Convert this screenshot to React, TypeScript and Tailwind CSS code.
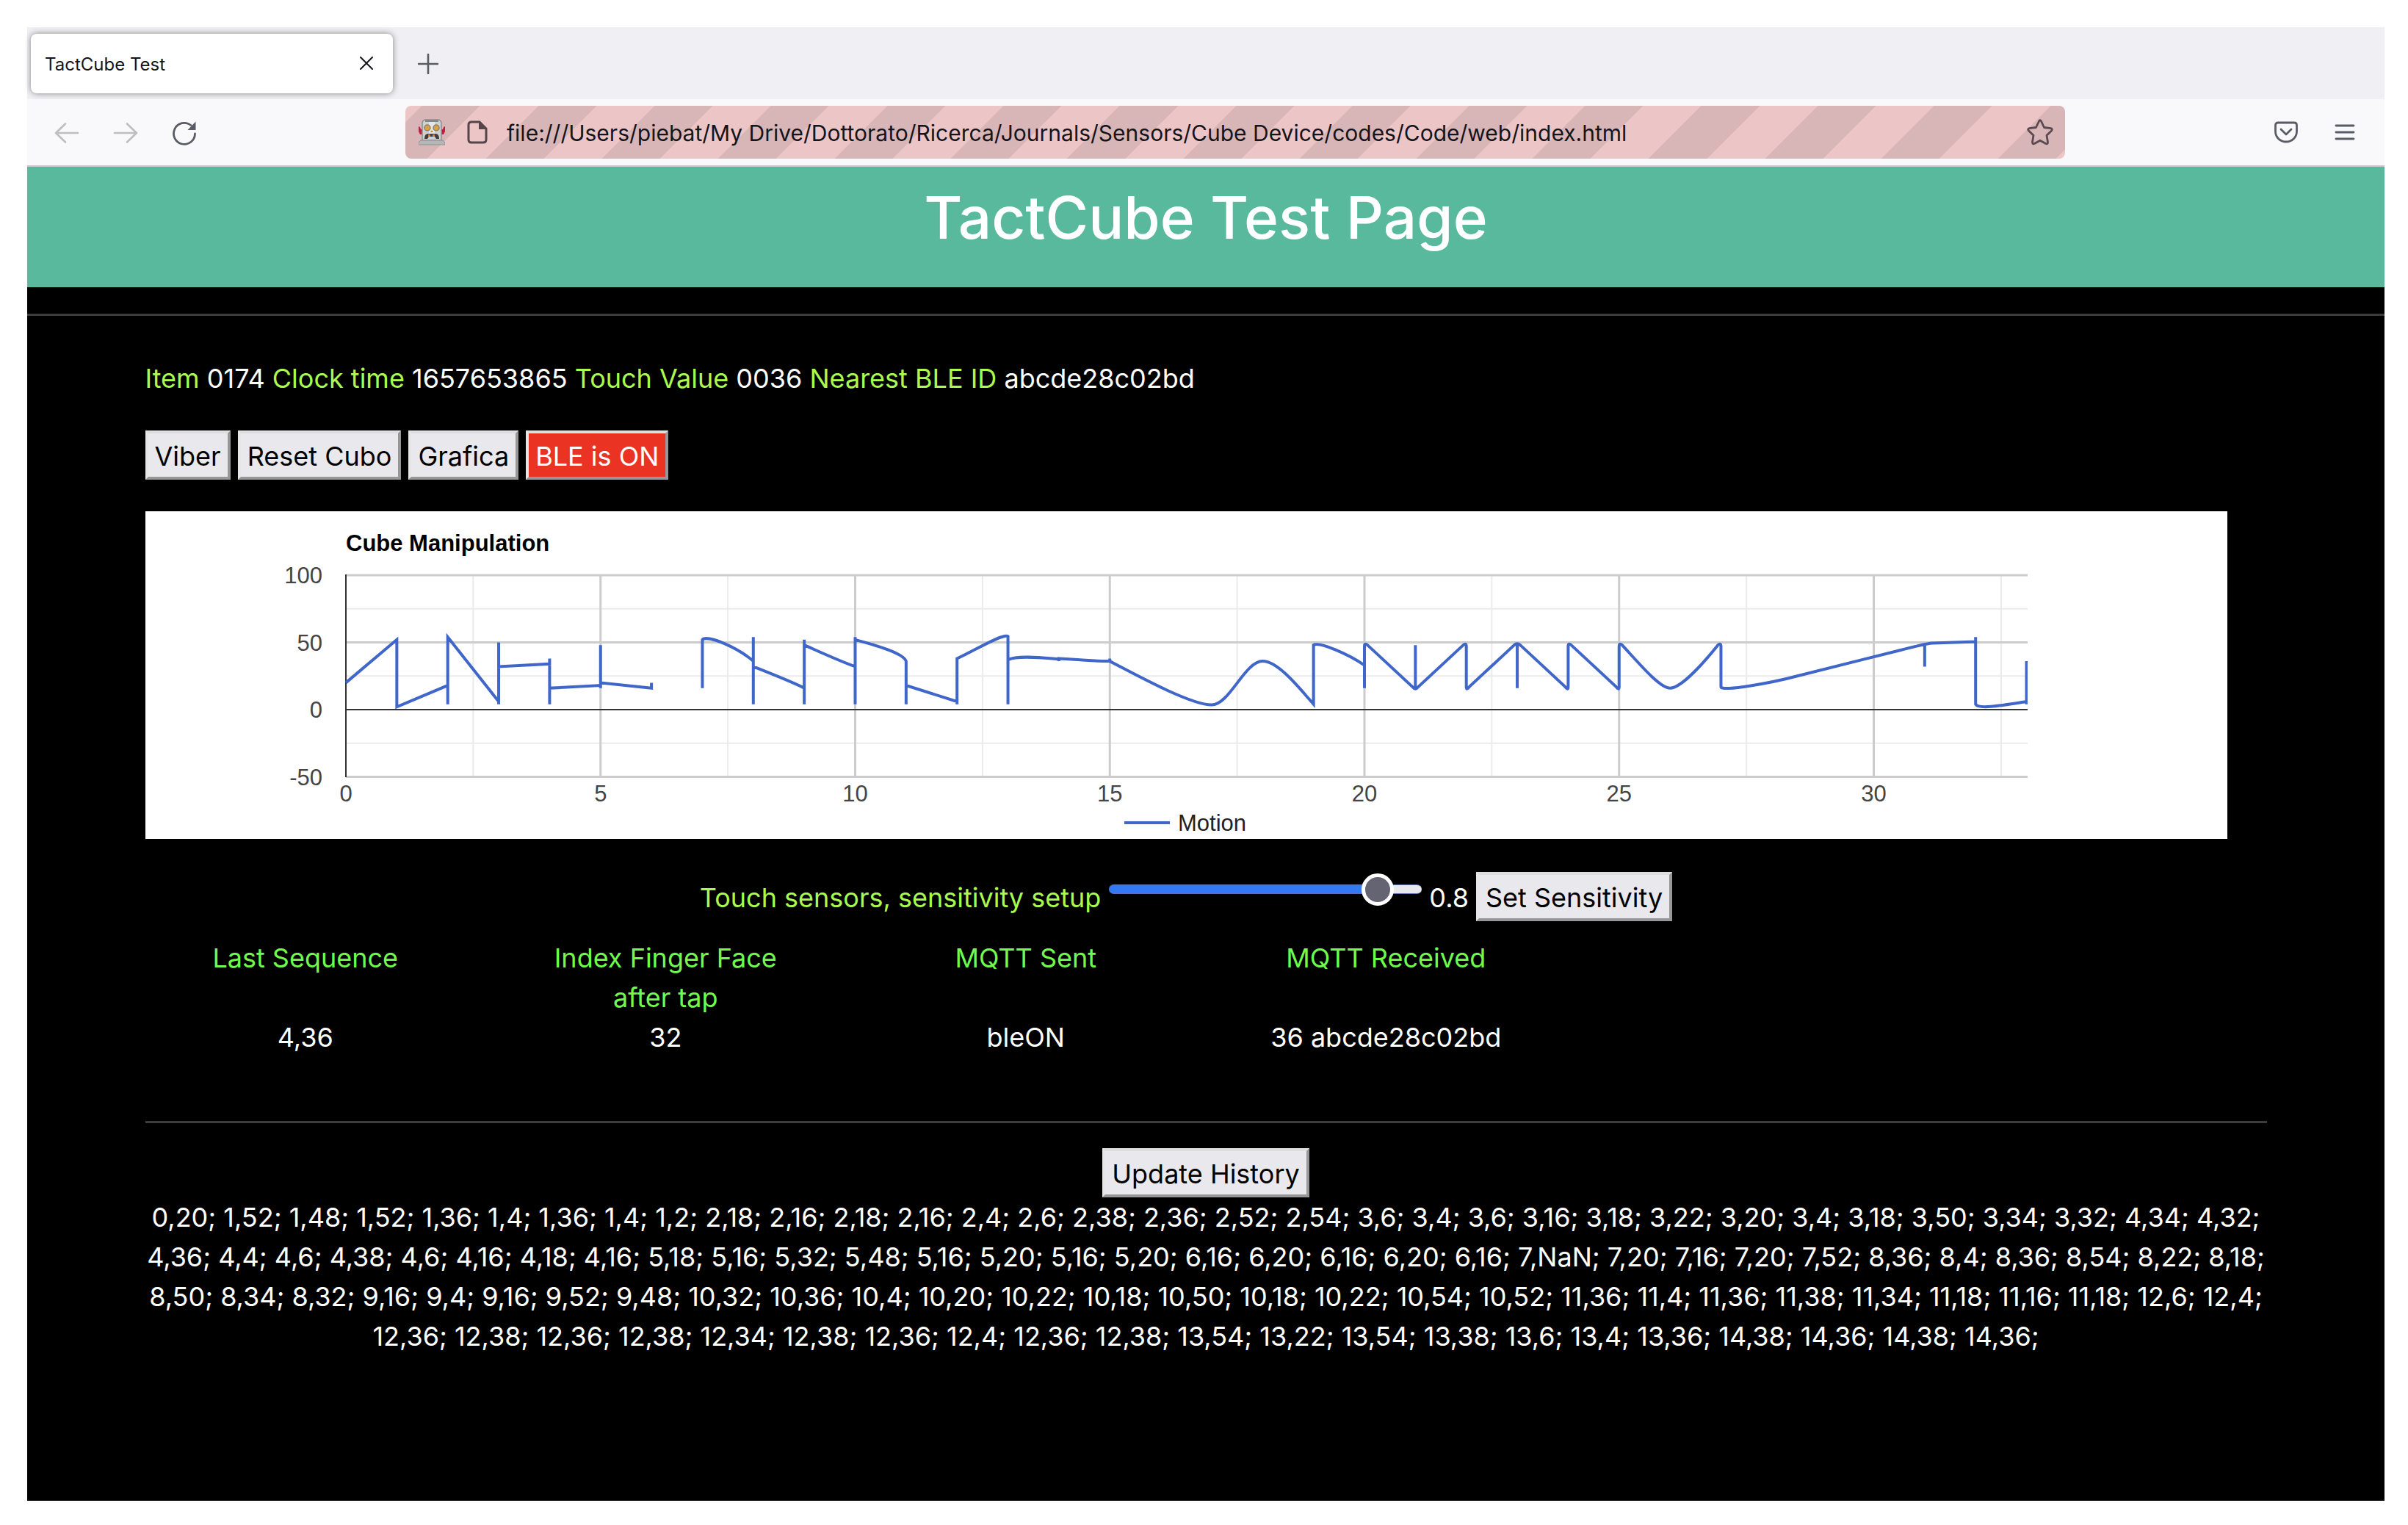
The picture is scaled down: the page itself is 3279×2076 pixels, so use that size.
import React, { useState } from 'react';

const HISTORY =
  '0,20; 1,52; 1,48; 1,52; 1,36; 1,4; 1,36; 1,4; 1,2; 2,18; 2,16; 2,18; 2,16; 2,4; 2,6; 2,38; 2,36; 2,52; 2,54; 3,6; 3,4; 3,6; 3,16; 3,18; 3,22; 3,20; 3,4; 3,18; 3,50; 3,34; 3,32; 4,34; 4,32; 4,36; 4,4; 4,6; 4,38; 4,6; 4,16; 4,18; 4,16; 5,18; 5,16; 5,32; 5,48; 5,16; 5,20; 5,16; 5,20; 6,16; 6,20; 6,16; 6,20; 6,16; 7,NaN; 7,20; 7,16; 7,20; 7,52; 8,36; 8,4; 8,36; 8,54; 8,22; 8,18; 8,50; 8,34; 8,32; 9,16; 9,4; 9,16; 9,52; 9,48; 10,32; 10,36; 10,4; 10,20; 10,22; 10,18; 10,50; 10,18; 10,22; 10,54; 10,52; 11,36; 11,4; 11,36; 11,38; 11,34; 11,18; 11,16; 11,18; 12,6; 12,4; 12,36; 12,38; 12,36; 12,38; 12,34; 12,38; 12,36; 12,4; 12,36; 12,38; 13,54; 13,22; 13,54; 13,38; 13,6; 13,4; 13,36; 14,38; 14,36; 14,38; 14,36;';

// Motion curve in data units: x is the sequence index, y the touch value
const MOTION_PATH = [
  'M0 20L1 52V2L2 18V4V54L3 6V4V50V32L4 34V38V4V16L5 18V16V48V20L6 16V20',
  'M7 16V52C7.1 56 7.7 46 8 36V54V4V32C8.4 26 8.8 20 9 16V4V52V48C9.3 43 9.7 36 10 32V4V54V52',
  'C10.4 48 10.95 42 11 36V4V18L12 6V4V38C12.3 43 12.9 57 13 54.5V4V37',
  'C13.2 41 13.8 38 14 37.5V36V38C14.4 37 14.8 36 15 36V38V36',
  'C15.6 24 16.6 3.5 17 3.5C17.35 3.5 17.65 36 18 36C18.3 36 18.7 17 19 4V48',
  'C19.1 51 19.7 41 20 33V16V47Q20 50 20.06 48L20.94 17Q21 14 21.06 17L21.94 48Q22 50 22 47V17',
  'Q22 14 22.06 17L22.94 48Q23 50 23.06 48L23.94 17Q24 14 24 17V47Q24 50 24.06 48L24.94 17Q25 14 25 17V47',
  'Q25 50 25.06 48C25.4 34 25.8 16 26 16C26.2 16 26.6 32 26.94 48Q27 50 27 47V17',
  'C27 13 28 20 28.5 25L30.5 44C30.8 47 31 49 31.15 49.5L32 50.5V54V4C32.05 0 32.5 3 33 6V4V36',
  'M21 16V48M23 48V16M31 49V32',
].join('');

const PLOT = { left: 273, right: 2563, top: 87, bottom: 361, zero: 270 };
const xPos = (x: number) => PLOT.left + x * 69.35;
const yPos = (y: number) => PLOT.zero - y * 1.83;

interface RaisedButtonProps {
  children: React.ReactNode;
  active?: boolean;
  onClick?: () => void;
}

const RaisedButton: React.FC<RaisedButtonProps> = ({ children, active, onClick }) => (
  <button
    type="button"
    onClick={onClick}
    className={`h-[67px] shrink-0 border-4 px-[9px] pt-[2px] text-[36px] leading-[54px] whitespace-nowrap border-t-[#dedede] border-l-[#e6e6e6] border-r-[#979797] border-b-[#979797] ${
      active ? 'bg-[#ea3323] text-white' : 'bg-[#e9e9ed] text-black'
    }`}
  >
    {children}
  </button>
);

const TabStrip: React.FC = () => (
  <div className="flex h-[98px] items-center bg-[#f0f0f4] pl-[5px]">
    <div className="flex h-[81px] w-[493px] items-center justify-between rounded-lg bg-white pr-[27px] pl-[19px] shadow-[0_0_8px_rgba(0,0,0,0.45)]">
      <span className="pt-[3px] text-[24px] text-[#15141a]">TactCube Test</span>
      <button type="button" aria-label="Close tab">
        <svg className="h-[18px] w-[18px]" viewBox="0 0 18 18" stroke="#15141a" strokeWidth={2} strokeLinecap="round">
          <path d="M1 1l16 16M17 1L1 17" />
        </svg>
      </button>
    </div>
    <button type="button" aria-label="New tab" className="ml-[34px] pt-[2px]">
      <svg className="h-[28px] w-[28px]" viewBox="0 0 28 28" stroke="#5b5b66" strokeWidth={2.6} strokeLinecap="round">
        <path d="M14 1v26M1 14h26" />
      </svg>
    </button>
  </div>
);

const RobotIcon: React.FC = () => (
  <svg className="h-[36px] w-[36px] shrink-0" viewBox="0 0 36 36">
    <path d="M0 10l2 1 1 3h2v7H2L0 17zM36 10l-2 1-1 3h-2v7h3l2-4z" fill="#c0203f" />
    <path d="M5 29V6q0-5 5-5h16q5 0 5 5v23z" fill="#cfd1d1" stroke="#8d9090" strokeWidth={1.5} />
    <path d="M9 1h18v3H9z" fill="#858888" />
    <path d="M14 4h8v16h-8z" fill="#e6e8e8" />
    <path d="M3 29h30l3 3v3H0v-3z" fill="#b4b7b7" stroke="#8d9090" />
    <circle cx="12" cy="12" r="4" fill="#dca03f" stroke="#8a8173" strokeWidth={1.5} />
    <circle cx="24" cy="12" r="4" fill="#dca03f" stroke="#8a8173" strokeWidth={1.5} />
    <path d="M16 18l2-3 2 3z" fill="#d78226" />
    <path d="M8 27q0-7 5-7h10q5 0 5 7h-4l-2-3h-8l-2 3z" fill="#443a3a" />
    <path d="M13 21h3v3h-3zM19 21h3v3h-3z" fill="#d78226" />
  </svg>
);

const AddressBar: React.FC = () => (
  <div className="flex h-[92px] items-center border-b-2 border-[#cbcbcd] bg-[#f9f9fb] pr-[40px] pl-[37px]">
    <div className="flex w-[478px] shrink-0 items-center gap-[46px] pt-[2px]">
      <button type="button" aria-label="Back">
        <svg className="h-[34px] w-[34px]" viewBox="0 0 34 34" fill="none" stroke="#bebec0" strokeWidth={2.6} strokeLinecap="round" strokeLinejoin="round">
          <path d="M32 17H2M15 4.5L2 17l13 12.500" />
        </svg>
      </button>
      <button type="button" aria-label="Forward">
        <svg className="h-[34px] w-[34px]" viewBox="0 0 34 34" fill="none" stroke="#bebec0" strokeWidth={2.6} strokeLinecap="round" strokeLinejoin="round">
          <path d="M2 17h30M19 4.5L32 17 19 29.5" />
        </svg>
      </button>
      <button type="button" aria-label="Reload">
        <svg className="h-[34px] w-[34px]" viewBox="0 0 34 34" fill="none" stroke="#5b5b66" strokeWidth={2.8} strokeLinecap="round">
          <path d="M31.500 18A14.500 14.500 0 1 1 26 6.500" />
          <path d="M32.500 1.500v11.500H21.500z" fill="#5b5b66" stroke="none" />
        </svg>
      </button>
    </div>
    <div className="flex h-[72px] min-w-0 flex-1 items-center rounded-lg bg-[repeating-linear-gradient(135deg,#ecc5c6_0px,#ecc5c6_16px,#d8b6b7_16px,#d8b6b7_72px,#ecc5c6_72px,#ecc5c6_112px)] pr-[16px] pl-[18px]">
      <RobotIcon />
      <svg className="ml-[30px] h-[32px] w-[28px] shrink-0" viewBox="0 0 28 32" fill="none" stroke="#54464b" strokeWidth={3}>
        <path d="M6 2h11l9 9v15q0 4-4 4H6q-4 0-4-4V6q0-4 4-4z" />
        <path d="M16 1v11h11z" fill="#54464b" stroke="none" />
      </svg>
      <input
        aria-label="Address"
        className="ml-[26px] min-w-0 flex-1 bg-transparent pt-[2px] text-[30px] text-[#15141a] outline-none"
        defaultValue="file:///Users/piebat/My Drive/Dottorato/Ricerca/Journals/Sensors/Cube Device/codes/Code/web/index.html"
      />
      <button type="button" aria-label="Bookmark this page">
        <svg className="h-[36px] w-[36px]" viewBox="0 0 36 36" fill="none" stroke="#5a4a50" strokeWidth={2.8} strokeLinejoin="round">
          <path d="M16.5 3Q18 .5 19.5 3L23.5 11.5 32.5 12.7Q35.5 13.5 33.5 16L27 22.3 28.5 31.5Q28.5 34.5 25.7 33.5L18 29.2 10.3 33.5Q7.5 34.5 7.5 31.5L9 22.3 2.5 16Q.5 13.5 3.5 12.7L12.5 11.5z" />
        </svg>
      </button>
    </div>
    <button type="button" aria-label="Save to Pocket" className="ml-[285px]">
      <svg className="h-[30px] w-[32px]" viewBox="0 0 32 30" fill="none" stroke="#5b5b66" strokeWidth={2.8} strokeLinecap="round" strokeLinejoin="round">
        <path d="M5 2h22q3.500 0 3.500 3.500V14a14.500 14 0 0 1-29 0V5.500Q1.500 2 5 2z" />
        <path d="M9 11l7 7 7-7" />
      </svg>
    </button>
    <button type="button" aria-label="Open menu" className="ml-[50px]">
      <svg className="h-[24px] w-[28px]" viewBox="0 0 28 24" stroke="#5b5b66" strokeWidth={2.8} strokeLinecap="round">
        <path d="M2 3h24M2 12h24M2 21h24" />
      </svg>
    </button>
  </div>
);

const MotionChart: React.FC = () => (
  <svg className="block w-full bg-white" viewBox="0 0 2835 446" fontFamily="'Liberation Sans', Arial, sans-serif" fontSize={31}>
    <text x={PLOT.left} y={54} fontWeight="bold">
      Cube Manipulation
    </text>
    {[75, 25, -25].map((y) => (
      <path key={y} d={`M${PLOT.left} ${yPos(y)}H${PLOT.right}`} stroke="#ebebeb" strokeWidth={2} />
    ))}
    {[2.5, 7.5, 12.5, 17.5, 22.5, 27.5, 32.5].map((x) => (
      <path key={x} d={`M${xPos(x)} ${PLOT.top}V${PLOT.bottom}`} stroke="#ebebeb" strokeWidth={2} />
    ))}
    {[5, 10, 15, 20, 25, 30].map((x) => (
      <path key={x} d={`M${xPos(x)} ${PLOT.top}V${PLOT.bottom}`} stroke="#cccccc" strokeWidth={3} />
    ))}
    {[100, 50, -50].map((y) => (
      <path key={y} d={`M${PLOT.left} ${yPos(y)}H${PLOT.right}`} stroke="#cccccc" strokeWidth={3} />
    ))}
    <path d={`M${PLOT.left} ${PLOT.zero}H${PLOT.right}M${PLOT.left} 86V362`} stroke="#333333" strokeWidth={2} />
    <svg x={0} y={0} width={PLOT.right} height={446}>
      <path
        d={MOTION_PATH}
        transform={`translate(${PLOT.left} ${PLOT.zero}) scale(69.35 -1.83)`}
        vectorEffect="non-scaling-stroke"
        fill="none"
        stroke="#3f66c8"
        strokeWidth={4}
      />
    </svg>
    {[100, 50, 0, -50].map((y) => (
      <text key={y} x={241} y={yPos(y) + 11} textAnchor="end" fill="#444444">
        {y}
      </text>
    ))}
    {[0, 5, 10, 15, 20, 25, 30].map((x) => (
      <text key={x} x={xPos(x)} y={395} textAnchor="middle" fill="#444444">
        {x}
      </text>
    ))}
    <path d="M1333 424H1395" stroke="#3f66c8" strokeWidth={4} />
    <text x={1406} y={435} fill="#222222">
      Motion
    </text>
  </svg>
);

const SensitivityRow: React.FC = () => {
  const [value, setValue] = useState(0.8);
  const percent = 5 + ((value + 1) / 2) * 90;

  return (
    <div className="mt-[45px] flex items-center justify-center text-[36px] leading-[54px]">
      <label htmlFor="sensitivity" className="pt-[2px] text-[#a9fc4f]">
        Touch sensors, sensitivity setup
      </label>
      <input
        id="sensitivity"
        type="range"
        min={-1}
        max={1}
        step={0.1}
        value={value}
        onChange={(e) => setValue(Number(e.target.value))}
        className="mt-[17px] ml-[11px] h-[13px] w-[426px] appearance-none self-start rounded-full border-y border-[#5c6fae] [&::-webkit-slider-thumb]:h-[44px] [&::-webkit-slider-thumb]:w-[44px] [&::-webkit-slider-thumb]:appearance-none [&::-webkit-slider-thumb]:rounded-full [&::-webkit-slider-thumb]:border-[5px] [&::-webkit-slider-thumb]:border-white [&::-webkit-slider-thumb]:bg-[#656473]"
        style={{ background: `linear-gradient(90deg, #3478f6 ${percent}%, #e9e9ed ${percent}%)` }}
      />
      <output htmlFor="sensitivity" className="mr-[10px] ml-[10px] pt-[2px]">
        {value}
      </output>
      <RaisedButton>Set Sensitivity</RaisedButton>
    </div>
  );
};

const StatusTable: React.FC = () => (
  <div className="-mx-[27px] mt-[23px]">
    <table className="w-2/3 table-fixed text-center text-[36px] leading-[54px]">
      <thead className="align-top text-[#70fc4d]">
        <tr>
          {['Last Sequence', 'Index Finger Face after tap', 'MQTT Sent', 'MQTT Received'].map((name) => (
            <th key={name} className="px-[54px] font-normal">
              {name}
            </th>
          ))}
        </tr>
      </thead>
      <tbody>
        <tr>
          {['4,36', '32', 'bleON', '36 abcde28c02bd'].map((cell) => (
            <td key={cell} className="px-[54px]">
              {cell}
            </td>
          ))}
        </tr>
      </tbody>
    </table>
  </div>
);

export default function App() {
  const readings = [
    ['Item', '0174'],
    ['Clock time', '1657653865'],
    ['Touch Value', '0036'],
    ['Nearest BLE ID', 'abcde28c02bd'],
  ];

  return (
    <div className="flex min-h-screen flex-col bg-white pt-[37px] pr-[32px] pb-[33px] pl-[37px] font-['Inter',sans-serif]">
      <TabStrip />
      <AddressBar />
      <main className="flex-1 bg-black text-white">
        <header className="flex h-[164px] justify-center bg-[#59b99d]">
          <h1 className="mt-[16px] text-[80px] leading-[106px] font-medium">TactCube Test Page</h1>
        </header>
        <hr className="mt-[36px] border-t-[3px] border-[#3c3c3c]" />
        <div className="px-[5%] pt-[58px]">
          <p className="text-[36px] leading-[54px]">
            {readings.map(([name, value]) => (
              <React.Fragment key={name}>
                <span className="text-[#a9fc4f]">{name}</span> {value}{' '}
              </React.Fragment>
            ))}
          </p>
          <div className="mt-[44px] flex gap-[10px]">
            <RaisedButton>Viber</RaisedButton>
            <RaisedButton>Reset Cubo</RaisedButton>
            <RaisedButton>Grafica</RaisedButton>
            <RaisedButton active>BLE is ON</RaisedButton>
          </div>
          <div className="mt-[43px] max-w-[2835px]">
            <MotionChart />
            <SensitivityRow />
          </div>
          <StatusTable />
          <hr className="mt-[87px] border-t-[3px] border-[#3c3c3c]" />
          <div className="mt-[34px] flex justify-center">
            <RaisedButton>Update History</RaisedButton>
          </div>
          <p className="-mx-[27px] text-center text-[36px] leading-[54px]">{HISTORY}</p>
        </div>
      </main>
    </div>
  );
}
